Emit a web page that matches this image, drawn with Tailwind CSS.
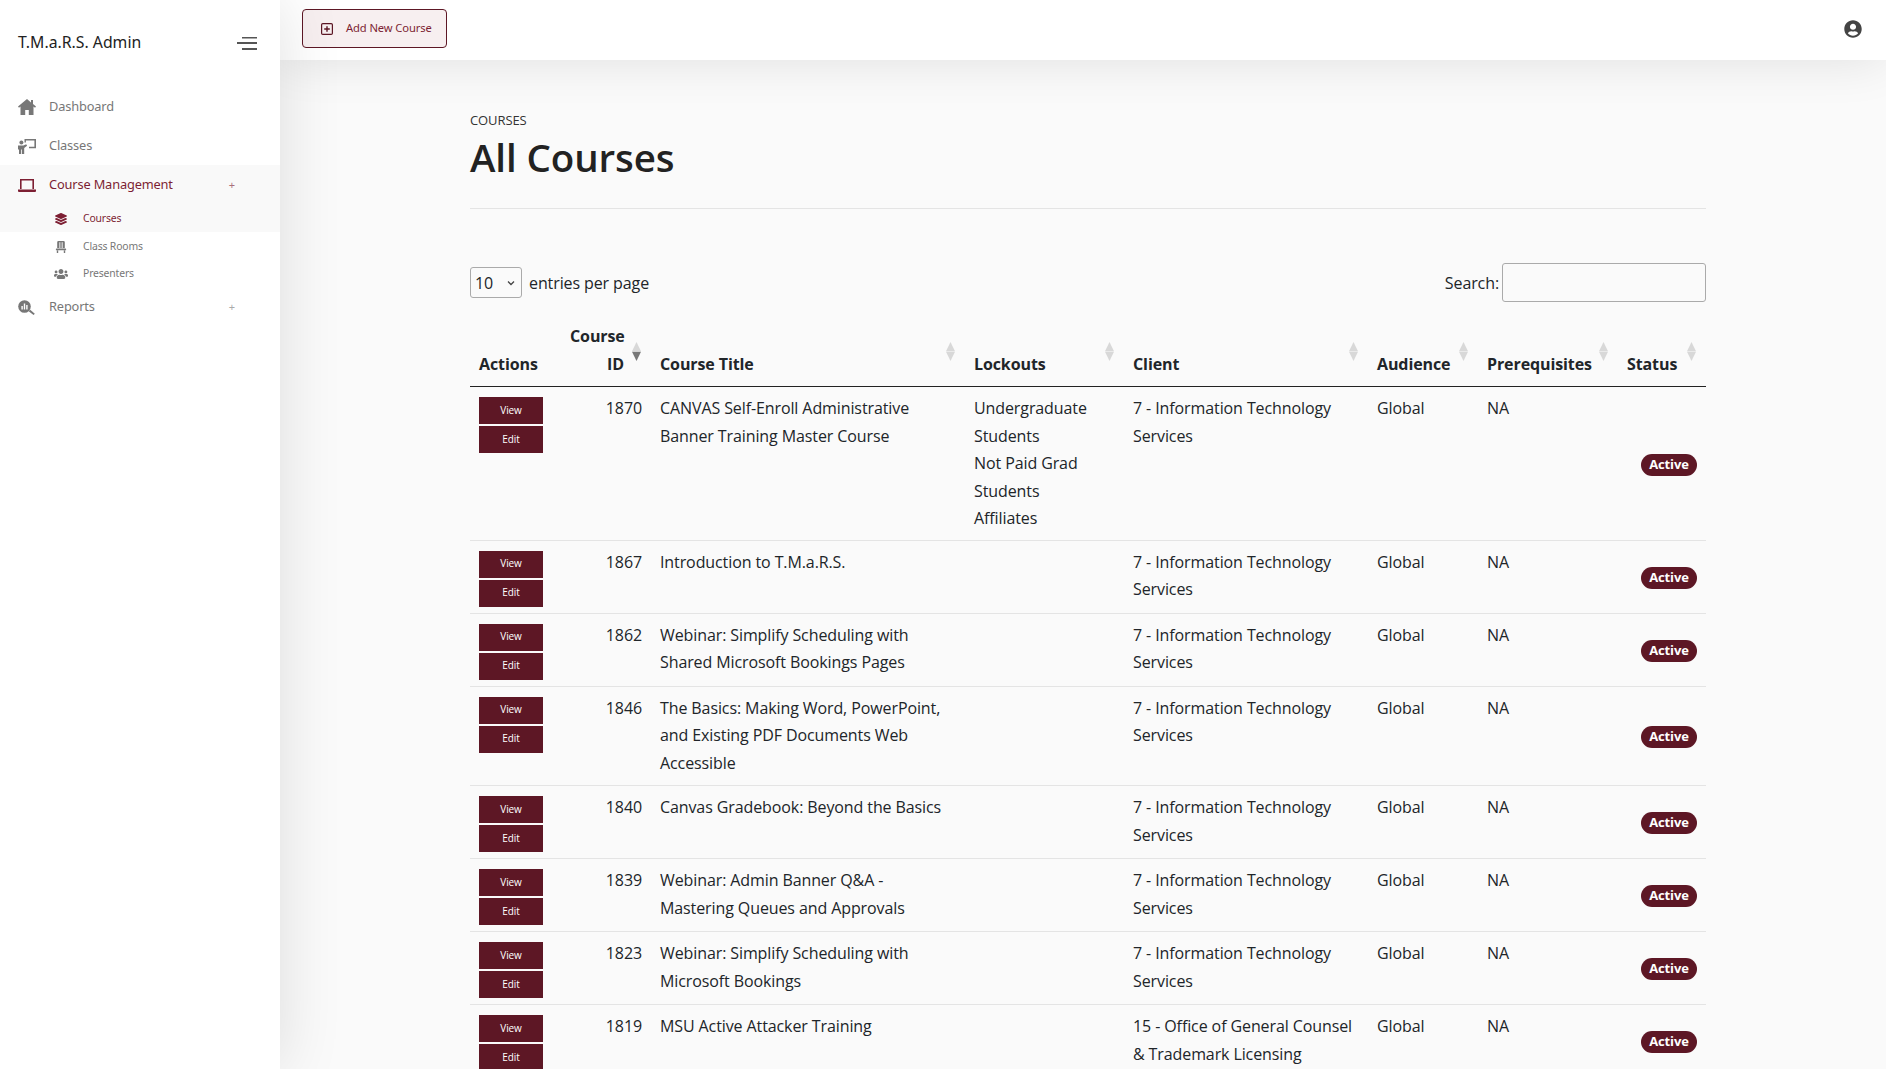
<!DOCTYPE html>
<html lang="en">
<head>
  <meta charset="UTF-8" />
  <title>All Courses</title>
  <script src="https://cdn.jsdelivr.net/npm/@tailwindcss/browser@4"></script>
</head>
<body class="h-screen overflow-hidden bg-[#fafafa] font-['Open_Sans',sans-serif] text-[16px] tracking-[-0.1px] text-[#212529]">
<div class="flex h-[1069px] overflow-hidden">

  <!-- sidebar -->
  <aside class="relative z-20 w-[280px] shrink-0 bg-white font-['Noto_Sans',sans-serif] shadow-[0_0_60px_rgba(0,0,0,0.12)]">
    <div class="flex h-[86px] items-center justify-between pl-[18px] pr-[23px]">
      <span class="text-[15.8px] tracking-normal text-[#222]">T.M.a.R.S. Admin</span>
      <svg class="h-[13px] w-[20px] text-[#555]" viewBox="0 0 20 13" fill="currentColor"><rect x="5" y="0" width="15" height="1.5"/><rect x="0" y="5" width="20" height="2"/><rect x="5" y="11" width="15" height="2"/></svg>
    </div>
    <nav class="pt-[1px] text-[12.8px] tracking-[-0.15px] text-[#777]">
      <a class="flex h-[40px] items-center pl-[18px]">
        <svg class="h-[16px] w-[18px]" viewBox="0 0 18 16" fill="currentColor"><path d="M9 0L0 7.6l1 1.2 1.5-1.2V16h4.7v-5h3.6v5h4.7V7.6L17 8.8l1-1.2-3-2.5V1h-2v2.4z"/></svg>
        <span class="ml-[13px]">Dashboard</span>
      </a>
      <a class="flex h-[38px] items-center pl-[18px]">
        <svg class="h-[15px] w-[18px]" viewBox="0 0 18 15" fill="currentColor"><circle cx="3.4" cy="3.6" r="2"/><path d="M0 6.6h5.4l2.8-1.4.9 1.5-2.9 2.2V15H4v-4.4h-.8V15H1V10.4H0z"/><path d="M6.5 0H18v9.2h-7V7.8h5.4V1.4H7.9V3.4H6.5z"/></svg>
        <span class="ml-[13px]">Classes</span>
      </a>
      <div class="bg-[#f9f9f9] text-[#7d1f33]">
        <a class="flex h-[40px] items-center pl-[18px]">
          <svg class="h-[13px] w-[18px]" viewBox="0 0 18 13" fill="currentColor"><path d="M2 0h14v10h-1.6V1.5H3.6V10H2z"/><path d="M0 10.4h18V12a1 1 0 0 1-1 1H1a1 1 0 0 1-1-1z"/></svg>
          <span class="ml-[13px]">Course Management</span>
          <span class="ml-auto mr-[45px] text-[11px] text-[#a9707c]">+</span>
        </a>
        <a class="flex h-[27px] items-center pl-[55px] text-[10.4px]">
          <svg class="h-[12px] w-[12px]" viewBox="0 0 512 512" fill="currentColor"><path d="M12.41 148.02l232.94 105.67c6.8 3.09 14.49 3.09 21.29 0l232.94-105.67c16.55-7.51 16.55-32.52 0-40.03L266.65 2.31a25.607 25.607 0 0 0-21.29 0L12.41 107.98c-16.55 7.51-16.55 32.53 0 40.04zm487.18 88.28l-58.09-26.33-161.64 73.27c-7.56 3.43-15.59 5.17-23.86 5.17s-16.29-1.74-23.86-5.17L70.51 209.97l-58.1 26.33c-16.55 7.5-16.55 32.5 0 40l232.94 105.59c6.8 3.08 14.49 3.08 21.29 0L499.59 276.3c16.55-7.5 16.55-32.5 0-40zm0 127.8l-57.87-26.23-161.86 73.37c-7.56 3.43-15.59 5.17-23.86 5.17s-16.29-1.74-23.86-5.17L70.29 337.87 12.41 364.1c-16.55 7.5-16.55 32.5 0 40l232.94 105.59c6.8 3.08 14.49 3.08 21.29 0L499.59 404.1c16.55-7.5 16.55-32.5 0-40z"/></svg>
          <span class="ml-[16px]">Courses</span>
        </a>
      </div>
      <a class="flex h-[29px] items-center pl-[55px] text-[10.4px]">
        <svg class="h-[12px] w-[12px]" viewBox="0 0 12 12" fill="currentColor"><path d="M3.4 0h5.2a1.2 1.2 0 0 1 1.2 1.2V7H2.2V1.2A1.2 1.2 0 0 1 3.4 0zM1.5 7.5h9a.6.6 0 0 1 .6.6v1.1H.9V8.1a.6.6 0 0 1 .6-.6zM1.8 9.6h1.4V12H1.8zM8.8 9.6h1.4V12H8.8z"/><path d="M4.1 1.2h.6V7h-.6zM5.7 1.2h.6V7h-.6zM7.3 1.2h.6V7h-.6z" fill="#fff"/></svg>
        <span class="ml-[16px]">Class Rooms</span>
      </a>
      <a class="flex h-[26px] items-center pl-[54px] text-[10.4px]">
        <svg class="h-[12px] w-[14px]" viewBox="0 0 640 512" fill="currentColor"><path d="M96 224c35.3 0 64-28.7 64-64s-28.7-64-64-64-64 28.7-64 64 28.7 64 64 64zm448 0c35.3 0 64-28.7 64-64s-28.7-64-64-64-64 28.7-64 64 28.7 64 64 64zm32 32h-64c-17.6 0-33.5 7.1-45.1 18.6 40.3 22.1 68.9 62 75.1 109.4h66c17.7 0 32-14.3 32-32v-32c0-35.3-28.7-64-64-64zm-256 0c61.9 0 112-50.1 112-112S381.9 32 320 32 208 82.1 208 144s50.1 112 112 112zm76.8 32h-8.3c-20.8 10-43.9 16-68.5 16s-47.6-6-68.5-16h-8.3C179.6 288 128 339.6 128 403.2V432c0 26.5 21.5 48 48 48h288c26.5 0 48-21.5 48-48v-28.8c0-63.6-51.6-115.2-115.2-115.2zm-223.7-13.4C161.5 263.1 145.6 256 128 256H64c-35.3 0-64 28.7-64 64v32c0 17.7 14.3 32 32 32h65.9c6.3-47.4 34.9-87.3 75.2-109.4z"/></svg>
        <span class="ml-[15px]">Presenters</span>
      </a>
      <a class="flex h-[40px] items-center pl-[18px]">
        <svg class="h-[15px] w-[18px]" viewBox="0 0 18 15" fill="currentColor"><circle cx="6.5" cy="6.5" r="6.3"/><path d="M10.6 11.2l1.6-1.4 4.6 4-1.2 1.2z"/><path d="M3.4 6h1.4v3.4H3.4zM5.8 3.4h1.4v6H5.8zM8.2 5h1.4v4.4H8.2z" fill="#fff"/></svg>
        <span class="ml-[13px]">Reports</span>
        <span class="ml-auto mr-[45px] text-[11px] text-[#aaa]">+</span>
      </a>
    </nav>
  </aside>

  <div class="flex min-w-0 flex-1 flex-col">
    <!-- top bar -->
    <header class="relative z-10 flex h-[60px] shrink-0 items-start justify-between bg-white pl-[22px] pr-[24px] shadow-[0_0_50px_rgba(0,0,0,0.11)]">
      <button class="mt-[9px] flex h-[39px] w-[145px] items-center rounded-[4px] border border-[#5d1725] bg-[#f7eff0] pl-[18px] font-['Noto_Sans',sans-serif] text-[11.2px] text-[#7d1f33]">
        <svg class="h-[12px] w-[12px] text-[#5d1725]" viewBox="0 0 12 12" fill="none" stroke="currentColor" stroke-width="1.2"><rect x="0.6" y="0.6" width="10.8" height="10.8" rx="1.2"/><path d="M6 3.2v5.6M3.2 6h5.6" stroke-width="1.4"/></svg>
        <span class="ml-[13px]">Add New Course</span>
      </button>
      <svg class="mt-[20px] h-[18px] w-[18px] text-[#444]" viewBox="0 0 496 512" fill="currentColor"><path d="M248 8C111 8 0 119 0 256s111 248 248 248 248-111 248-248S385 8 248 8zm0 96c48.6 0 88 39.4 88 88s-39.4 88-88 88-88-39.4-88-88 39.4-88 88-88zm0 344c-58.7 0-111.3-26.6-146.5-68.2 18.8-35.4 55.6-59.8 98.5-59.8 2.4 0 4.8.4 7.1 1.1 13 4.2 26.6 6.9 40.9 6.9 14.3 0 28-2.7 40.9-6.9 2.3-.7 4.7-1.1 7.1-1.1 42.9 0 79.7 24.4 98.5 59.8C359.3 421.4 306.7 448 248 448z"/></svg>
    </header>

    <!-- page -->
    <main class="ml-[190px] mr-[180px] min-w-0 flex-1">
      <div class="pt-[51px] text-[13px] leading-[18px] text-[#333]">COURSES</div>
      <h1 class="mt-[2px] text-[38.5px] font-semibold leading-[53px] text-[#222]">All Courses</h1>
      <div class="mt-[24px] h-px bg-[#e4e4e4]"></div>

      <div class="mt-[54px] flex h-[39px] items-center justify-between">
        <div class="flex items-center">
          <div class="flex h-[31px] w-[52px] items-center justify-between rounded-[3px] border border-[#aaa] pl-[4px] pr-[6px]">
            <span>10</span>
            <svg class="h-[6px] w-[8px] text-[#444]" viewBox="0 0 8 6" fill="none" stroke="currentColor" stroke-width="1.3"><path d="M1 1.5l3 3 3-3"/></svg>
          </div>
          <span class="ml-[7px]">entries per page</span>
        </div>
        <div class="flex items-center">
          <span class="mr-[3px]">Search:</span>
          <div class="h-[39px] w-[204px] rounded-[3px] border border-[#aaa]"></div>
        </div>
      </div>

      <table class="mt-[14px] w-[1236px] table-fixed border-collapse">
        <colgroup>
          <col class="w-[91px]"/><col class="w-[90px]"/><col class="w-[314px]"/><col class="w-[159px]"/><col class="w-[244px]"/><col class="w-[110px]"/><col class="w-[140px]"/><col class="w-[88px]"/>
        </colgroup>
        <thead id="head"></thead>
        <tbody id="rows"></tbody>
      </table>
    </main>
  </div>
</div>

<script>
  const IT = "7 - Information Technology Services";
  const courses = [
    { id: 1870, title: "CANVAS Self-Enroll Administrative Banner Training Master Course", client: IT, lockouts: ["Undergraduate Students", "Not Paid Grad Students", "Affiliates"] },
    { id: 1867, title: "Introduction to T.M.a.R.S.", client: IT },
    { id: 1862, title: "Webinar: Simplify Scheduling with Shared Microsoft Bookings Pages", client: IT },
    { id: 1846, title: "The Basics: Making Word, PowerPoint, and Existing PDF Documents Web Accessible", client: IT },
    { id: 1840, title: "Canvas Gradebook: Beyond the Basics", client: IT },
    { id: 1839, title: "Webinar: Admin Banner Q&amp;A - Mastering Queues and Approvals", client: IT },
    { id: 1823, title: "Webinar: Simplify Scheduling with Microsoft Bookings", client: IT },
    { id: 1819, title: "MSU Active Attacker Training", client: "15 - Office of General Counsel &amp; Trademark Licensing" }
  ];

  const sortIcon = (active) => `
    <svg class="h-[19px] w-[9px]" viewBox="0 0 9 19">
      <path d="M4.5 0L9 9.2H0z" fill="#d8d8d8"/>
      <path d="M4.5 19L0 9.8h9z" fill="${active ? "#777" : "#d8d8d8"}"/>
    </svg>`;

  const headers = [
    ["Actions", "text-left", false],
    ["Course<br>ID", "text-right pr-[27px]", true],
    ["Course Title", "text-left", true],
    ["Lockouts", "text-left", true],
    ["Client", "text-left", true],
    ["Audience", "text-left", true],
    ["Prerequisites", "text-left", true],
    ["Status", "text-left", true]
  ];

  document.getElementById("head").innerHTML = `<tr class="border-b border-[#222]">` + headers.map(([label, align, sort], i) => `
    <th class="relative pb-[8px] pl-[9px] pr-[9px] pt-[7px] align-bottom font-bold leading-[27.5px] ${align}">
      ${label}
      ${sort ? `<span class="absolute right-[10px] top-[26px] block h-[19px] w-[9px]">${sortIcon(i === 1)}</span>` : ""}
    </th>`).join("") + `</tr>`;

  document.getElementById("rows").innerHTML = courses.map(c => `
    <tr class="border-b border-[#e4e4e4] leading-[27.5px]">
      <td class="px-[9px] pb-[6px] pt-[10px] align-top">
        <a class="flex h-[27px] w-[64px] items-center justify-center bg-[#5d1725] text-[10px] font-medium text-white">View</a>
        <a class="mt-[2px] flex h-[27px] w-[64px] items-center justify-center bg-[#5d1725] text-[10px] font-medium text-white">Edit</a>
      </td>
      <td class="px-[9px] py-[8px] text-right align-top">${c.id}</td>
      <td class="px-[9px] py-[8px] align-top">${c.title}</td>
      <td class="px-[9px] py-[8px] align-top"><div class="-mb-[1px]">${(c.lockouts || []).map(l => `<div>${l}</div>`).join("")}</div></td>
      <td class="px-[9px] py-[8px] align-top">${c.client}</td>
      <td class="px-[9px] py-[8px] align-top">Global</td>
      <td class="px-[9px] py-[8px] align-top">NA</td>
      <td class="pr-[9px] text-right align-middle">
        <span class="inline-block h-[22px] w-[56px] rounded-full bg-[#5d1725] text-center text-[13px] font-bold leading-[21px] text-white">Active</span>
      </td>
    </tr>`).join("");
</script>
</body>
</html>
